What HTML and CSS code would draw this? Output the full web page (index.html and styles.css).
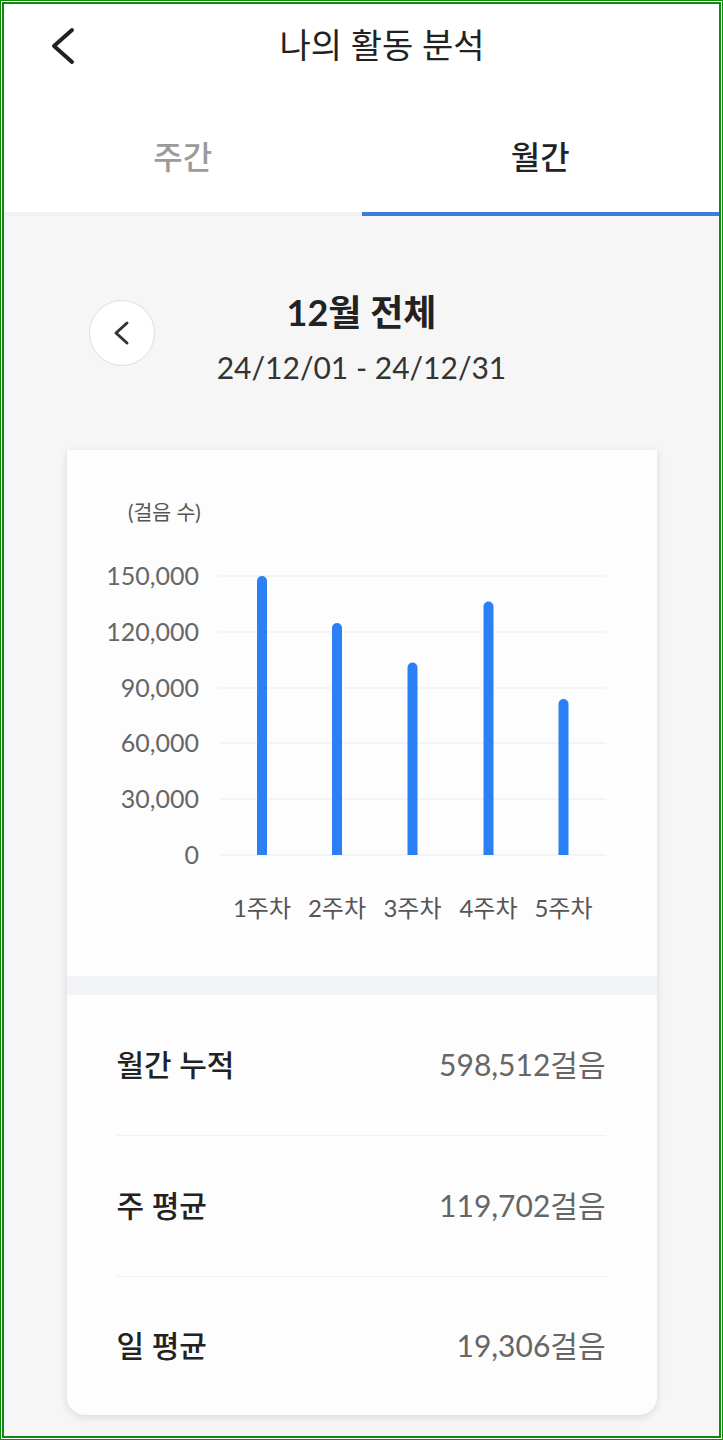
FILE: index.html
```html
<!DOCTYPE html>
<html lang="ko">
  <head>
    <meta charset="utf-8" />
    <title>나의 활동 분석</title>
    <link rel="stylesheet" href="styles.css">
  </head>
  <body>
    <div class="frame">
      <div class="screen">
        <header class="topbar">
          <button class="back-btn" aria-label="뒤로">
            <svg width="30" height="44" viewBox="0 0 30 44">
              <path d="M24 6 L6 22 L24 38" fill="none" stroke="#222" stroke-width="4" stroke-linecap="round" stroke-linejoin="round" />
            </svg>
          </button>
          <h1 class="title">나의 활동 분석</h1>
        </header>

        <nav class="tabs">
          <div class="tab">주간</div>
          <div class="tab active">월간</div>
        </nav>

        <main>
          <div class="period">
            <button class="prev-btn" aria-label="이전 달">
              <svg width="24" height="30" viewBox="0 0 24 30">
                <path d="M17 5 L6 15 L17 25" fill="none" stroke="#333" stroke-width="3" stroke-linecap="round" stroke-linejoin="round" />
              </svg>
            </button>
            <div class="period-text">
              <h2 class="period-title">12월 전체</h2>
              <p class="period-range">24/12/01 - 24/12/31</p>
            </div>
          </div>

          <section class="card">
            <div class="chart">
              <svg width="590" height="526" viewBox="0 0 590 526">
                <text class="unit" x="61" y="70">(걸음 수)</text>

                <!-- grid lines -->
                <g stroke="#eef1f5" stroke-width="1.5">
                  <line x1="152" y1="126" x2="539" y2="126" />
                  <line x1="152" y1="182" x2="539" y2="182" />
                  <line x1="152" y1="238" x2="539" y2="238" />
                  <line x1="152" y1="293" x2="539" y2="293" />
                  <line x1="152" y1="349" x2="539" y2="349" />
                  <line x1="152" y1="405" x2="539" y2="405" />
                </g>

                <g class="axis-y" text-anchor="end">
                  <text x="132" y="135">150,000</text>
                  <text x="132" y="191">120,000</text>
                  <text x="132" y="247">90,000</text>
                  <text x="132" y="302">60,000</text>
                  <text x="132" y="358">30,000</text>
                  <text x="132" y="414">0</text>
                </g>

                <!-- weekly bars -->
                <g fill="#2b80f6">
                  <path d="M190 405 V131 A5 5 0 0 1 200 131 V405 Z" />
                  <path d="M265 405 V178 A5 5 0 0 1 275 178 V405 Z" />
                  <path d="M340.5 405 V217.5 A5 5 0 0 1 350.5 217.5 V405 Z" />
                  <path d="M416.5 405 V156.5 A5 5 0 0 1 426.5 156.5 V405 Z" />
                  <path d="M491.5 405 V254 A5 5 0 0 1 501.5 254 V405 Z" />
                </g>

                <g class="axis-x" text-anchor="middle">
                  <text x="195" y="467">1주차</text>
                  <text x="270" y="467">2주차</text>
                  <text x="345.5" y="467">3주차</text>
                  <text x="421.5" y="467">4주차</text>
                  <text x="496.5" y="467">5주차</text>
                </g>
              </svg>
            </div>

            <div class="band"></div>

            <ul class="stats">
              <li class="stat">
                <span class="stat-label">월간 누적</span>
                <span class="stat-value">598,512걸음</span>
              </li>
              <li class="stat">
                <span class="stat-label">주 평균</span>
                <span class="stat-value">119,702걸음</span>
              </li>
              <li class="stat">
                <span class="stat-label">일 평균</span>
                <span class="stat-value">19,306걸음</span>
              </li>
            </ul>
          </section>
        </main>
      </div>
    </div>
  </body>
</html>
```

FILE: styles.css
```css
body {
  margin: 0;
  font-family: Lato, "Noto Sans CJK KR", sans-serif;
}
.frame {
  width: 723px;
  height: 1440px;
  box-sizing: border-box;
  border: 1px solid #0f8a0f;
  padding: 1px;
  background: #fff;
}
.screen {
  height: 100%;
  box-sizing: border-box;
  border: 2px solid #0f8a0f;
  background: #f6f6f6;
  overflow: hidden;
}

/* header */
.topbar {
  display: flex;
  align-items: center;
  height: 82px;
  background: #fff;
}
.back-btn {
  display: flex;
  margin: 2px 0 0 44px;
  width: 30px;
  height: 44px;
  padding: 0;
  border: none;
  background: none;
}
.title {
  flex: 1;
  margin: 0 33px 0 0;
  text-align: center;
  font-size: 34px;
  line-height: 44px;
  font-weight: 400;
  color: #222;
}

/* tabs */
.tabs {
  display: flex;
  background: #fff;
}
.tab {
  flex: 1;
  text-align: center;
  padding: 49px 0 33px;
  font-size: 32px;
  line-height: 44px;
  font-weight: 500;
  color: #9b9b9b;
  border-bottom: 4px solid #f1f1f1;
}
.tab.active {
  color: #222;
  border-bottom-color: #3a7dd8;
}

/* period */
.period {
  display: grid;
  grid-template-columns: 1fr auto 1fr;
  padding-top: 74px;
}
.prev-btn {
  justify-self: start;
  display: flex;
  align-items: center;
  justify-content: center;
  margin: 10px 0 0 85px;
  width: 66px;
  height: 66px;
  padding: 0;
  box-sizing: border-box;
  border: 1.5px solid #dedede;
  border-radius: 50%;
  background: #fff;
}
.period-text {
  text-align: center;
}
.period-title {
  margin: 0;
  font-size: 36px;
  line-height: 44px;
  font-weight: 700;
  color: #222;
}
.period-range {
  margin: 15px 0 0;
  font-size: 30px;
  line-height: 36px;
  color: #333;
}

/* card */
.card {
  width: 590px;
  margin: 65px auto 0;
  background: #fdfdfd;
  border-radius: 0 0 18px 18px;
  box-shadow: 0 2px 8px rgba(0, 0, 0, 0.12);
  overflow: hidden;
}
.chart svg {
  display: block;
}
.unit {
  font-size: 20.5px;
  fill: #555;
}
.axis-y {
  font-size: 25px;
  fill: #666;
}
.axis-x {
  font-size: 24px;
  fill: #555;
}
.band {
  height: 19px;
  background: #f2f4f7;
}
.stats {
  list-style: none;
  margin: 0;
  padding: 0 51px 0 50px;
}
.stat {
  display: flex;
  justify-content: space-between;
  align-items: center;
  box-sizing: border-box;
  height: 140px;
  padding-bottom: 5px;
}
.stat + .stat {
  height: 141px;
  border-top: 1px solid #eef0f3;
}
.stat:last-child {
  height: 139px;
}
.stat-label {
  font-size: 30px;
  font-weight: 500;
  color: #222;
}
.stat-value {
  font-size: 30px;
  color: #666;
}
```
